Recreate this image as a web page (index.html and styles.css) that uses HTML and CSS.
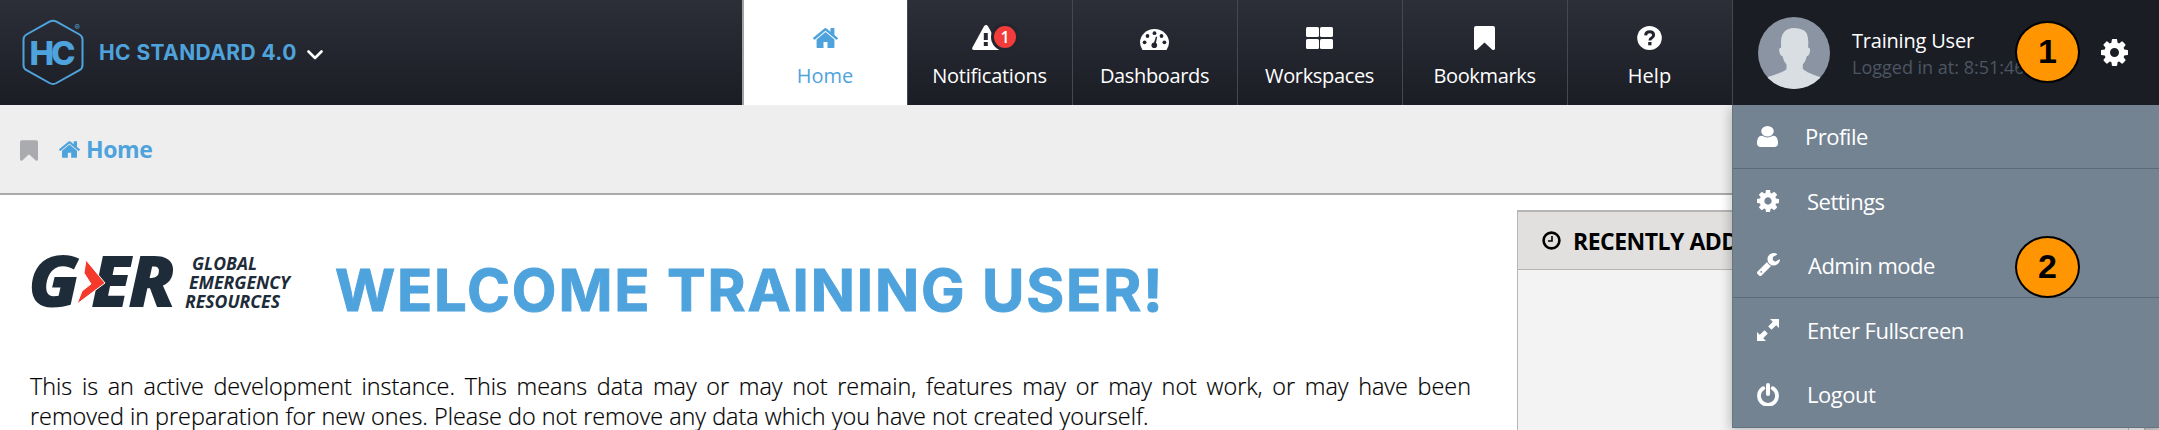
FILE: index.html
```html
<!DOCTYPE html>
<html lang="en">
<head>
<meta charset="utf-8">
<title>HC Standard 4.0</title>
<link rel="stylesheet" href="styles.css">
</head>
<body>
<svg class="defs" width="0" height="0">
  <symbol id="home" viewBox="89 253 1614 1283"><path d="M1472 992v480q0 26-19 45t-45 19h-384v-384h-256v384h-384q-26 0-45-19t-19-45v-480q0-1 .5-3t.5-3l575-474 575 474q1 2 1 6zm223-69l-62 74q-8 9-21 11h-3q-13 0-21-7l-692-577-692 577q-12 8-24 7-13-2-21-11l-62-74q-8-10-7-23.500t11-21.500l719-599q32-26 76-26t76 26l244 204v-195q0-14 9-23t23-9h192q14 0 23 9t9 23v408l219 182q10 8 11 21.500t-7 23.500z"/></symbol>
  <symbol id="cog" viewBox="128 128 1536 1536"><path d="M1152 896q0-106-75-181t-181-75-181 75-75 181 75 181 181 75 181-75 75-181zm512-109v222q0 12-8 23t-20 13l-185 28q-19 54-39 91 35 50 107 138 10 12 10 25t-9 23q-27 37-99 108t-94 71q-12 0-26-9l-138-108q-44 23-91 38-16 136-29 186-7 28-36 28h-222q-14 0-24.500-8.500t-11.500-21.500l-28-184q-49-16-90-37l-141 107q-10 9-25 9-14 0-25-11-126-114-165-168-7-10-7-23 0-12 8-23 15-21 51-66.500t54-70.500q-27-50-41-99l-183-27q-13-2-21-12.500t-8-23.500v-222q0-12 8-23t19-13l186-28q14-46 39-92-40-57-107-138-10-12-10-24 0-10 9-23 26-36 98.500-107.500t94.500-71.500q13 0 26 10l138 107q44-23 91-38 16-136 29-186 7-28 36-28h222q14 0 24.500 8.500t11.500 21.500l28 184q49 16 90 37l142-107q9-9 24-9 13 0 25 10 129 119 165 170 7 8 7 22 0 12-8 23-15 21-51 66.500t-54 70.500q26 50 41 98l183 28q13 2 21 12.500t8 23.500z"/></symbol>
  <symbol id="bookmark" viewBox="0 0 21 24"><path d="M2 0h17q2 0 2 2v20.500q0 1.500-1.800 1.500-.6 0-1.200-.6L10.500 16.500 3 23.400q-.6.6-1.200.6Q0 24 0 22.500V2Q0 0 2 0z"/></symbol>
</svg>

<header class="topbar">
  <div class="brand">
    <svg class="brand-logo" viewBox="0 0 64 70">
      <path d="M28.500 3.700Q32 1.800 35.500 3.700L58.500 16.500Q61.500 18.300 61.500 21.500V47Q61.500 50.500 58.500 52.200L35.500 65Q32 67 28.500 65L5.500 52.200Q2.500 50.500 2.500 47V21.500Q2.500 18.300 5.500 16.500Z" fill="none" stroke="currentColor" stroke-width="2"/>
      <text x="8.500" y="47" class="brand-h">H</text>
      <text x="30" y="47" class="brand-h">C</text>
      <text x="53.500" y="12" class="brand-r">®</text>
    </svg>
    <span class="brand-name">HC STANDARD 4.0</span>
    <svg class="chevron" viewBox="0 0 16 10"><path d="M1.500 1.500 8 8l6.500-6.500" fill="none" stroke="currentColor" stroke-width="2.600" stroke-linecap="round" stroke-linejoin="round"/></svg>
  </div>
  <nav class="tabs">
    <a class="tab tab-active"><span class="tab-icon"><svg width="25" height="20"><use href="#home"/></svg></span><span class="t-home">Home</span></a>
    <a class="tab"><span class="tab-icon icon-alert">
      <svg width="28" height="25" viewBox="0 0 28 25"><path fill-rule="evenodd" d="M12 1.200q2-2.200 4 0L27.600 22.500q.9 2.500-1.600 2.500H2Q-.5 25 .4 22.500zM11.800 8v7h4V8zm0 9v4h4v-4z"/></svg>
      <b class="count">1</b></span><span class="t-not">Notifications</span></a>
    <a class="tab"><span class="tab-icon icon-low"><svg width="29" height="21" viewBox="0 0 29 21"><path d="M2.500 21A14.200 14.200 0 0 1 0 13.500a14.500 13.500 0 0 1 29 0Q29 17.500 26.500 21z"/><g fill="#23262e"><circle cx="4.600" cy="13.300" r="1.900"/><circle cx="7.500" cy="7" r="1.900"/><circle cx="14.500" cy="4.200" r="1.900"/><circle cx="21.500" cy="7" r="1.900"/><circle cx="24.400" cy="13.300" r="1.900"/><circle cx="14.300" cy="16.300" r="2.800"/><path d="m13.500 15 2.500-7.500 1.200.4-1.600 7.600z"/></g></svg></span><span class="t-dash">Dashboards</span></a>
    <a class="tab"><span class="tab-icon"><svg width="27" height="22" viewBox="0 0 27 22"><rect width="13" height="10" rx="1.500"/><rect x="14" width="13" height="10" rx="1.500"/><rect y="12" width="13" height="10" rx="1.500"/><rect x="14" y="12" width="13" height="10" rx="1.500"/></svg></span><span class="t-work">Workspaces</span></a>
    <a class="tab"><span class="tab-icon"><svg width="21" height="24"><use href="#bookmark"/></svg></span><span class="t-book">Bookmarks</span></a>
    <a class="tab"><span class="tab-icon"><svg width="25" height="24" viewBox="0 0 25 24"><ellipse cx="12.500" cy="12" rx="12.300" ry="12"/><path d="M8.600 9.300Q8.900 5.800 12.700 5.800q3.900 0 3.900 3.200 0 1.700-1.700 2.700-2 1.100-2 2.900" fill="none" stroke="#23262e" stroke-width="3"/><path d="M11.200 16h3.300v3.300h-3.300z" fill="#23262e"/></svg></span><span class="t-help">Help</span></a>
  </nav>
  <div class="user">
    <svg class="avatar" viewBox="0 0 72 72"><clipPath id="face"><circle cx="36" cy="36" r="36"/></clipPath><g clip-path="url(#face)"><path fill="#8a94a3" d="M0 0h72v72H0z"/><path fill="#d9dee3" d="M36.500 11C27 11 23 17 23 25q0 3.500.2 5.500-2.600.2-2 3.500.8 5 3.300 5.300.8 4.700 4 8.200v4.500Q27 54.500 10 60L0 72h72L62 60Q46 54.500 44.800 51.500V47.500q3.200-3.500 4-8.200 2.500-.3 3.300-5.300.5-3.300-2-3.500.2-2 .2-5.500 0-8-4-11.500Q42 11 36.500 11z"/></g></svg>
    <div class="who"><span class="who-name">Training User</span><span class="who-time">Logged in at: 8:51:46</span></div>
    <svg class="gear" width="27" height="27"><use href="#cog"/></svg>
  </div>
</header>

<div class="crumbs">
  <svg class="crumb-mark" width="18" height="21"><use href="#bookmark"/></svg>
  <svg class="crumb-home" width="21" height="17"><use href="#home"/></svg>
  <span class="crumb-text">Home</span>
</div>

<main class="page">
  <section class="welcome">
    <div class="hero">
      <svg class="ger" viewBox="0 0 262 56">
        <g class="ger-big"><text x="-2" y="52" textLength="52" lengthAdjust="spacingAndGlyphs">G</text><text x="61" y="52" textLength="40" lengthAdjust="spacingAndGlyphs">E</text><text x="98" y="52" textLength="48" lengthAdjust="spacingAndGlyphs">R</text></g>
        <path d="M56 5 75 28 47 49 52 36 61 29 54 18Z" fill="#f5392b" stroke="#fff" stroke-width="1"/>
        <g class="ger-small"><text x="162" y="14.500" textLength="65" lengthAdjust="spacingAndGlyphs">GLOBAL</text><text x="159" y="33.500" textLength="101" lengthAdjust="spacingAndGlyphs">EMERGENCY</text><text x="155" y="52.500" textLength="95" lengthAdjust="spacingAndGlyphs">RESOURCES</text></g>
      </svg>
      <h1 class="headline">WELCOME TRAINING USER!</h1>
    </div>
    <p class="intro">This is an active development instance. This means data may or may not remain, features may or may not work, or may have been removed in preparation for new ones. Please do not remove any data which you have not created yourself.</p>
  </section>
  <aside class="panel">
    <h2 class="panel-head">
      <svg width="19" height="19" viewBox="0 0 19 19"><circle cx="9.500" cy="9.500" r="7.900" fill="none" stroke="#000" stroke-width="2.600"/><path d="M10 5v5H6" fill="none" stroke="#000" stroke-width="1.600"/></svg>
      <span>RECENTLY ADDED</span>
    </h2>
    <div class="panel-body"><div class="scroll"></div></div>
  </aside>
  <div class="page-scroll"></div>
</main>

<div class="menu">
  <a class="item line"><svg width="21" height="21" viewBox="256 128 1280 1536" preserveAspectRatio="none"><path d="M1536 1399q0 109-62.500 187t-150.500 78h-854q-88 0-150.500-78t-62.500-187q0-85 8.500-160.500t31.500-152 58.500-131 94-89 134.500-34.500q131 128 313 128t313-128q76 0 134.500 34.500t94 89 58.500 131 31.500 152 8.500 160.500zm-256-887q0 159-112.500 271.500t-271.500 112.500-271.500-112.500-112.500-271.500 112.500-271.500 271.500-112.500 271.500 112.500 112.500 271.500z"/></svg><span>Profile</span></a>
  <a class="item wide"><svg width="22" height="22"><use href="#cog"/></svg><span>Settings</span></a>
  <a class="item line wide"><svg width="23" height="23" viewBox="85 128 1642 1643"><path d="M448 1472q0-26-19-45t-45-19-45 19-19 45 19 45 45 19 45-19 19-45zm644-420l-682 682q-37 37-90 37-52 0-91-37l-106-108q-38-36-38-90 0-53 38-91l681-681q39 98 114.500 173.500t173.500 114.500zm634-435q0 39-23 106-47 134-164.500 217.500t-258.500 83.500q-185 0-316.500-131.500t-131.500-316.500 131.500-316.500 316.500-131.500q58 0 121.500 16.500t107.500 46.500q16 11 16 28t-16 28l-293 169v224l193 107q5-3 79-48.500t135.500-81 70.500-35.500q15 0 23.500 10t8.500 25z"/></svg><span>Admin mode</span></a>
  <a class="item wide"><svg width="22" height="22" viewBox="0 0 22 22"><path d="M13 0h9v9l-2.800-2.800-4.700 4.600-3.300-3.300 4.600-4.700zM9 22H0v-9l2.800 2.800 4.700-4.600 3.300 3.300-4.600 4.700z"/></svg><span>Enter Fullscreen</span></a>
  <a class="item wide"><svg width="22" height="23" viewBox="0 0 22 23"><path d="M6.300 5.200a9 9 0 1 0 9.400 0" fill="none" stroke="#fff" stroke-width="3.800" stroke-linecap="round"/><path d="M11 2v9" stroke="#fff" stroke-width="4" stroke-linecap="round"/></svg><span>Logout</span></a>
</div>

<div class="callout callout-1">1</div>
<div class="callout callout-2">2</div>
</body>
</html>
```

FILE: styles.css
```css
* { box-sizing: border-box; }
body { margin: 0; height: 430px; overflow: hidden; position: relative; display: flex; flex-direction: column; background: #fff; font-family: "Open Sans", "Noto Sans", sans-serif; }
svg { display: block; flex: none; fill: currentColor; }
.defs { position: absolute; }

.topbar { height: 105px; flex: none; display: flex; background: linear-gradient(#2c2f38, #1b1d25); color: #fff; }
.brand { flex: 1; display: flex; align-items: center; padding-left: 21px; color: #4fa3dd; }
.brand-logo { width: 64px; height: 70px; }
.brand-h { font: 800 33px Inter, sans-serif; }
.brand-r { font: 8px Inter, sans-serif; }
.brand-name { margin-left: 14px; font: 700 21px/30px Inter, sans-serif; letter-spacing: 0.4px; white-space: nowrap; }
.chevron { width: 16px; height: 10px; margin: 5px 0 0 10px; color: #fff; }

.tabs { display: flex; }
.tab { width: 165px; display: flex; flex-direction: column; align-items: center; padding: 25px 1px 0 0; border-left: 1px solid #454851; font-size: 20px; line-height: 28px; white-space: nowrap; }
.tab-active { background: linear-gradient(#fff, #fff) padding-box; border-left: 2px solid #a0a2a6; color: #4fa3dd; }
.tab-icon { height: 25px; margin-bottom: 12px; display: flex; align-items: center; position: relative; }
.icon-low { align-items: flex-end; }
.icon-alert { margin-right: 7px; }
.count { position: absolute; left: 19px; top: -2px; width: 28px; height: 28px; border: 3px solid #23262e; border-radius: 50%; background: #f23b3b; font: 600 16px/23px "Open Sans", sans-serif; text-align: center; }
.t-not { letter-spacing: -0.25px; }
.t-dash, .t-work, .t-book { letter-spacing: -0.35px; }

.user { width: 427px; display: flex; align-items: center; padding: 0 31px 0 25px; background: #1b1d25; border-left: 1px solid #454851; }
.avatar { width: 72px; height: 72px; }
.who { flex: 1; display: flex; flex-direction: column; margin: 3px 0 0 22px; white-space: nowrap; }
.who-name { font-size: 20px; line-height: 27px; letter-spacing: -0.2px; }
.who-time { font-size: 18px; line-height: 27px; color: #4c5661; }

.crumbs { height: 90px; flex: none; display: flex; align-items: center; background: #eee; border-bottom: 2px solid #aaa; padding: 0 0 0 20px; color: #4fa3dd; }
.crumb-mark { color: #a9abae; margin-top: 2px; }
.crumb-home { margin-left: 21px; }
.crumb-text { margin-left: 6px; font-size: 23px; font-weight: 700; letter-spacing: -0.4px; }

.page { flex: 1; min-height: 0; display: flex; }
.welcome { width: 1471px; padding-left: 30px; }
.hero { display: flex; align-items: center; margin-top: 60px; height: 70px; }
.ger { width: 262px; height: 56px; margin-top: -14px; overflow: visible; }
.ger-big { font: italic 800 71px "Open Sans", sans-serif; fill: #1e2b39; }
.ger-small { font: italic 700 18px "Open Sans", sans-serif; fill: #1e2b39; }
.headline { margin: -1px 0 0 43px; font: 700 58px/70px Inter, sans-serif; letter-spacing: 1.85px; -webkit-text-stroke: 1px #4fa3dd; color: #4fa3dd; white-space: nowrap; }
.intro { margin: 46px 0 0; font-size: 23.4px; line-height: 30px; font-weight: 300; -webkit-text-stroke: 0.2px #000; text-align: justify; color: #000; }
.panel { width: 628px; margin: 15px 0 0 46px; display: flex; flex-direction: column; border: 1px solid #b5b5b5; border-top-width: 2px; border-bottom: 0; }
.panel-head { margin: 0; height: 58px; flex: none; display: flex; align-items: center; gap: 12px; padding-left: 24px; background: #e1e0de; border-bottom: 1px solid #b5b5b5; font-size: 23px; font-weight: 700; letter-spacing: -0.5px; white-space: nowrap; }
.panel-body { flex: 1; display: flex; justify-content: flex-end; background: #f3f3f3; }
.scroll { width: 16px; border-left: 1px solid #bbb; background: #fafafa; }
.page-scroll { flex: 1; background: #ccc; }

.menu { position: absolute; left: 1732px; top: 105px; width: 427px; height: 323px; background: #738392; border-left: 1px solid #677481; border-bottom: 1px solid #66727e; box-shadow: -2px 3px 10px rgba(0,0,0,.22); clip-path: inset(0 0 -10px -20px); color: #fff; }
.item { height: 64.400px; display: flex; align-items: center; padding: 0 0 1px 24px; gap: 27px; font-size: 22px; letter-spacing: -0.5px; white-space: nowrap; }
.wide { gap: 28px; }
.line { border-bottom: 1px solid #5b6a77; }

.callout { position: absolute; left: 2015px; width: 65px; height: 62px; border: 2px solid #000; border-radius: 50%; background: #ff9500; color: #000; font: 700 34px/57px "Liberation Sans", Arial, sans-serif; text-align: center; }
.callout-1 { top: 21px; }
.callout-2 { top: 236px; }
```
